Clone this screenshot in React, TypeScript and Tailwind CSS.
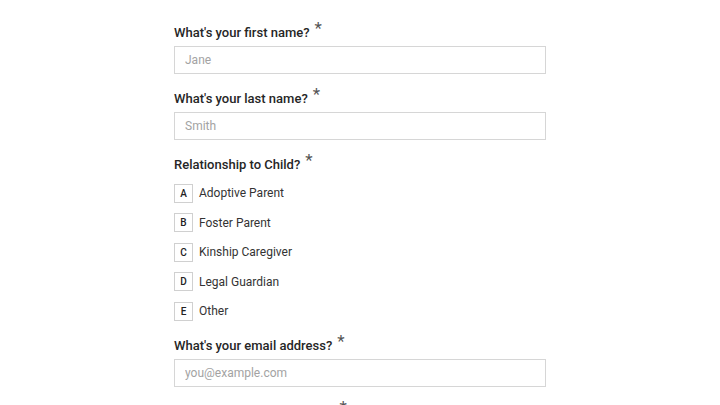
import React from "react";

const options = [
  { key: "A", label: "Adoptive Parent" },
  { key: "B", label: "Foster Parent" },
  { key: "C", label: "Kinship Caregiver" },
  { key: "D", label: "Legal Guardian" },
  { key: "E", label: "Other" },
];

const Label = ({ text }: { text: string }) => (
  <div className="h-[26px] flex items-center">
    <span className="text-[13px] font-medium text-[#262626]">{text}</span>
    <span className="ml-[5px] text-[17px] leading-none text-[#555] relative -top-[5px]">*</span>
  </div>
);

const TextField = ({ label, placeholder }: { label: string; placeholder: string }) => (
  <div className="mb-[12px]">
    <Label text={label} />
    <input
      placeholder={placeholder}
      className="w-full h-[28px] border border-[#d6d6d6] bg-white px-[10px] text-[12px] text-[#333] placeholder:text-[#a3a3a3] outline-none"
    />
  </div>
);

export default function App() {
  return (
    <div
      className="w-[720px] h-[405px] overflow-hidden bg-white"
      style={{ fontFamily: 'Roboto, "Noto Sans", sans-serif' }}
    >
      <div className="ml-[174px] w-[372px] pt-[20px]">
        <TextField label="What's your first name?" placeholder="Jane" />
        <TextField label="What's your last name?" placeholder="Smith" />

        {/* relationship */}
        <div className="mb-[7px]">
          <Label text="Relationship to Child?" />
          <div className="pt-[0.5px]">
            {options.map((o) => (
              <div key={o.key} className="h-[29.5px] flex items-center">
                <div className="w-[19px] h-[19px] border border-[#d0d0d0] flex items-center justify-center text-[10px] font-medium text-[#222]">
                  {o.key}
                </div>
                <span className="ml-[6px] text-[12px] text-[#333]">{o.label}</span>
              </div>
            ))}
          </div>
        </div>

        <TextField label="What's your email address?" placeholder="you@example.com" />
        <TextField label="What's your phone number?" placeholder="" />
      </div>
    </div>
  );
}
